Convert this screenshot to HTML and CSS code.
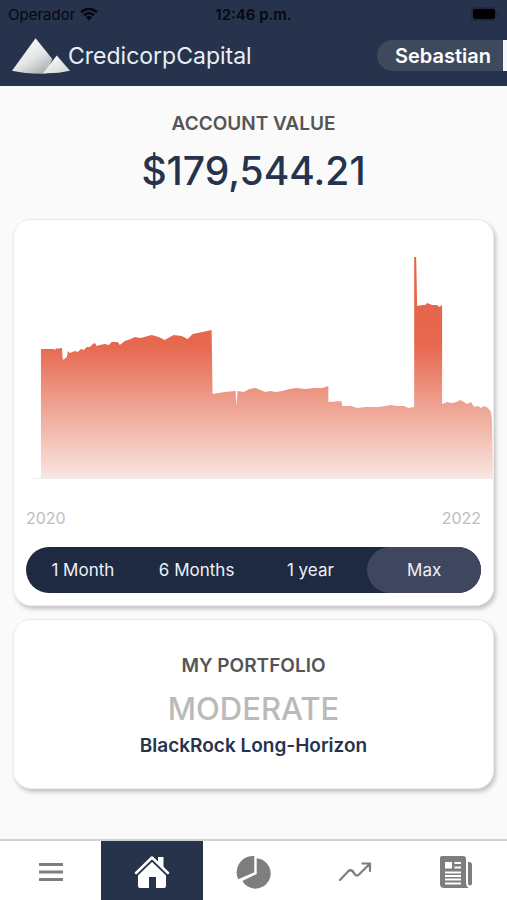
FILE: index.html
```html
<!DOCTYPE html>
<html lang="en">
<head>
<meta charset="utf-8">
<meta name="viewport" content="width=device-width, initial-scale=1">
<title>Credicorp Capital</title>
<link rel="stylesheet" href="styles.css">
</head>
<body>
<div class="app">
  <header class="header">
    <div class="status">
      <span class="carrier">Operador
        <svg class="wifi" viewBox="0 0 18 14" aria-hidden="true">
          <path d="M1 5.2a11.5 11.5 0 0 1 16 0M4 8.3a7.2 7.2 0 0 1 10 0" fill="none" stroke="currentColor" stroke-width="2.6"/>
          <path d="M9 13.4 5.9 10.3a4.4 4.4 0 0 1 6.2 0z" fill="currentColor"/>
        </svg>
      </span>
      <span class="time">12:46 p.m.</span>
      <svg class="battery" viewBox="0 0 28 14" aria-hidden="true">
        <rect x="0" y="0" width="25" height="14" rx="4" fill="#202a3e"/>
        <rect x="2" y="2" width="22" height="10" rx="2" fill="#000"/>
        <path d="M26 5c2 1 2 3 0 4z" fill="#151c2b"/>
      </svg>
    </div>
    <div class="bar">
      <div class="brand">
        <svg class="logo" viewBox="0 0 60 38" aria-hidden="true">
          <defs>
            <linearGradient id="peak" x1="0.3" y1="0.2" x2="0.85" y2="1">
              <stop offset="0" stop-color="#f5f7f7"/>
              <stop offset="0.45" stop-color="#e3e5e5"/>
              <stop offset="1" stop-color="#a3a6aa"/>
            </linearGradient>
            <linearGradient id="foot" x1="0" y1="0" x2="0.8" y2="1">
              <stop offset="0" stop-color="#fff"/>
              <stop offset="1" stop-color="#d5d8da"/>
            </linearGradient>
          </defs>
          <path d="M24 1 41 22 35 37Q15 37.500 0 34z" fill="url(#peak)"/>
          <path d="M45.500 18.500 59 34Q46 37 31.500 36.500z" fill="url(#foot)"/>
        </svg>
        <span class="brand-name">CredicorpCapital</span>
      </div>
      <button class="user" type="button">Sebastian</button>
    </div>
  </header>

  <main class="main">
    <section class="summary">
      <h1 class="label">ACCOUNT VALUE</h1>
      <p class="amount">$179,544.21</p>
    </section>

    <section class="card chart-card">
      <svg class="chart" viewBox="0 0 480 234" preserveAspectRatio="none" role="img" aria-label="Account value from 2020 to 2022">
        <defs>
          <linearGradient id="area" gradientUnits="userSpaceOnUse" x1="0" y1="7" x2="0" y2="228">
            <stop offset="0" stop-color="#e6644c"/>
            <stop offset="0.4" stop-color="#e6684f"/>
            <stop offset="0.7" stop-color="#efa898"/>
            <stop offset="1" stop-color="#f9e6e1"/>
          </linearGradient>
        </defs>
        <path d="M19 228.500H480" stroke="#eeecec" stroke-width="1"/>
        <path fill="url(#area)" d="M27 228V99H40L41 100 43 98 45 99 46 98 48 98 49 110 53 107 54 101 56 103 61 101 64 102 67 99 70 100 73 97 76 97 79 94 81 93 83 96 86 95 91 94 95 95 98 92 104 92 106 95 111 91 117 89 121 87 127 88 134 86 138 85 145 87 151 90 160 85 168 86 174 89 179 84 184 83 198 80 199 144 211 142 222 141 223 156 224 141 230 142 236 139 242 138 247 140 252 142 257 141 262 142 269 141 276 139 283 138 292 139 301 138 309 138 315 136 315 152 328 151 329 156 338 156 344 158 352 157 365 157 372 156 378 155 384 156 391 156 395 158 401 157 401 7 403 7 404 56 409 55 412 55 414 53 419 55 424 55 426 57 429 55 429 154 434 152 438 153 444 152 447 150 451 152 454 154 458 152 461 157 465 156 468 158 471 156 475 158 478 162 479 170 480 228z"/>
      </svg>
      <div class="years"><span>2020</span><span>2022</span></div>
      <div class="ranges">
        <button type="button" class="range">1 Month</button>
        <button type="button" class="range">6 Months</button>
        <button type="button" class="range">1 year</button>
        <button type="button" class="range active" aria-pressed="true">Max</button>
      </div>
    </section>

    <section class="card portfolio">
      <h2 class="label">MY PORTFOLIO</h2>
      <p class="profile">MODERATE</p>
      <p class="fund">BlackRock Long-Horizon</p>
    </section>
  </main>

  <nav class="tabs">
    <a class="tab" href="#menu" aria-label="Menu">
      <svg viewBox="0 0 36 36"><path d="M6 10.500H30M6 18H30M6 25.500H30" stroke="currentColor" stroke-width="3"/></svg>
    </a>
    <a class="tab current" href="#home" aria-label="Home" aria-current="page">
      <svg viewBox="0 0 36 36" fill="currentColor">
        <path d="M24 3H29.500V14L24 9z"/>
        <path d="M18 6 32 19.500V32Q32 34 30 34H22V23H15V34H6Q4 34 4 32V19.500z"/>
        <path d="M3 21 18 6.500 33 21" fill="none" stroke="#27334a" stroke-width="2"/>
        <path d="M2 19 18 3.500 34 19" fill="none" stroke="currentColor" stroke-width="2.500" stroke-linejoin="round" stroke-linecap="round"/>
      </svg>
    </a>
    <a class="tab" href="#allocation" aria-label="Allocation">
      <svg viewBox="0 0 36 36" fill="currentColor">
        <path d="M19.300 2V18.300L3.300 25.300A16.300 16.300 0 0 1 19.300 2z"/>
        <path d="M21.700 4.300A15.200 15.200 0 1 1 7.300 27L21.700 20z"/>
      </svg>
    </a>
    <a class="tab" href="#performance" aria-label="Performance">
      <svg viewBox="0 0 36 36" fill="none" stroke="currentColor" stroke-width="2.200" stroke-linecap="round" stroke-linejoin="round">
        <path d="M3 26 11.500 17Q13.500 15.500 15.500 17L18 20.500Q20 22.500 22 20.500L32.500 10M25.500 9.500H33V17"/>
      </svg>
    </a>
    <a class="tab" href="#news" aria-label="News">
      <svg viewBox="0 0 36 36" fill="currentColor">
        <path fill-rule="evenodd" d="M4 2H25Q28 2 28 5V29Q28 32 30.500 34H6Q2 34 2 30V4Q2 2 4 2zM7 8V14.500H14V8zM16.500 8V10H23V8zM16.500 12.500V14.500H23V12.500zM7 17.500V19.500H23V17.500zM7 21V23H23V21zM7 24.500V26.500H23V24.500zM7 28.500V30.500H23V28.500z"/>
        <path d="M30 8H32Q34 8.500 34 10.500V29.500Q34 31.500 32 31.500T30 29.500z"/>
      </svg>
    </a>
  </nav>
</div>
</body>
</html>
```

FILE: styles.css
```css
* {
  box-sizing: border-box;
}

body {
  margin: 0;
  font-family: Inter, "Liberation Sans", sans-serif;
  background: #fafafa;
  color: #27334c;
}

h1, h2, p {
  margin: 0;
}

button {
  font: inherit;
  border: 0;
  cursor: pointer;
}

.app {
  display: flex;
  flex-direction: column;
  min-height: 100vh;
}

.header {
  background: #27334c;
  overflow: hidden;
}

.status {
  display: grid;
  grid-template-columns: 1fr auto 1fr;
  align-items: center;
  height: 28px;
  padding: 0 8px;
  font-size: 15px;
  color: #05080e;
}

.carrier {
  display: flex;
  align-items: center;
  gap: 5px;
}

.wifi {
  width: 18px;
  height: 14px;
}

.time {
  font-weight: 600;
}

.battery {
  width: 28px;
  height: 14px;
  justify-self: end;
}

.bar {
  display: flex;
  justify-content: space-between;
  align-items: center;
  height: 58px;
  padding: 0 0 3px 12px;
}

.brand {
  display: flex;
  align-items: center;
  font-size: 23px;
  color: #e9eef8;
}

.logo {
  width: 59px;
  height: 38px;
}

.brand-name {
  margin-left: -3px;
}

.user {
  height: 31px;
  padding: 0 12px 0 18px;
  border-right: 4px solid #f4f6fa;
  border-radius: 16px 0 0 16px;
  background: #3f495e;
  color: #fff;
  font-size: 20px;
  font-weight: 600;
}

.main {
  flex: 1;
  display: flex;
  flex-direction: column;
  gap: 13px;
  padding: 24px 13px;
}

.summary {
  text-align: center;
  padding-bottom: 8px;
}

.label {
  font-size: 19px;
  line-height: 28px;
  font-weight: 600;
  color: #555;
}

.amount {
  font-size: 39px;
  line-height: 54px;
  padding-top: 6px;
  font-weight: 500;
}

.card {
  border: 1px solid #ececec;
  border-radius: 18px;
  background: #fff;
  box-shadow: 2px 3px 4px rgba(0, 0, 0, 0.22);
}

.chart-card {
  overflow: hidden;
  padding: 30px 0 12px;
}

.chart {
  display: block;
  width: 100%;
  height: 234px;
}

.years {
  display: flex;
  justify-content: space-between;
  padding: 24px 12px 19px;
  font-size: 16px;
  line-height: 20px;
  color: #bdbdbd;
}

.ranges {
  display: grid;
  grid-template-columns: repeat(4, 1fr);
  height: 46px;
  margin: 0 12px;
  border-radius: 23px;
  background: #1e2942;
}

.range {
  padding: 0;
  border-radius: 23px;
  background: transparent;
  color: #eef1f8;
  font-size: 17px;
}

.range.active {
  background: #3f475e;
}

.portfolio {
  padding: 32px 12px 26px;
  text-align: center;
}

.profile {
  padding-top: 8px;
  font-size: 31px;
  line-height: 42px;
  font-weight: 500;
  color: #bababa;
}

.fund {
  font-size: 19px;
  line-height: 32px;
  font-weight: 600;
}

.tabs {
  display: grid;
  grid-template-columns: repeat(5, 1fr);
  border-top: 2px solid #d2d2d2;
  background: #fff;
}

.tab {
  display: flex;
  justify-content: center;
  align-items: center;
  height: 59px;
  padding-top: 3px;
  color: #7e7e7e;
}

.tab svg {
  width: 36px;
  height: 36px;
}

.tab.current {
  background: #27334a;
  color: #fff;
}
```
